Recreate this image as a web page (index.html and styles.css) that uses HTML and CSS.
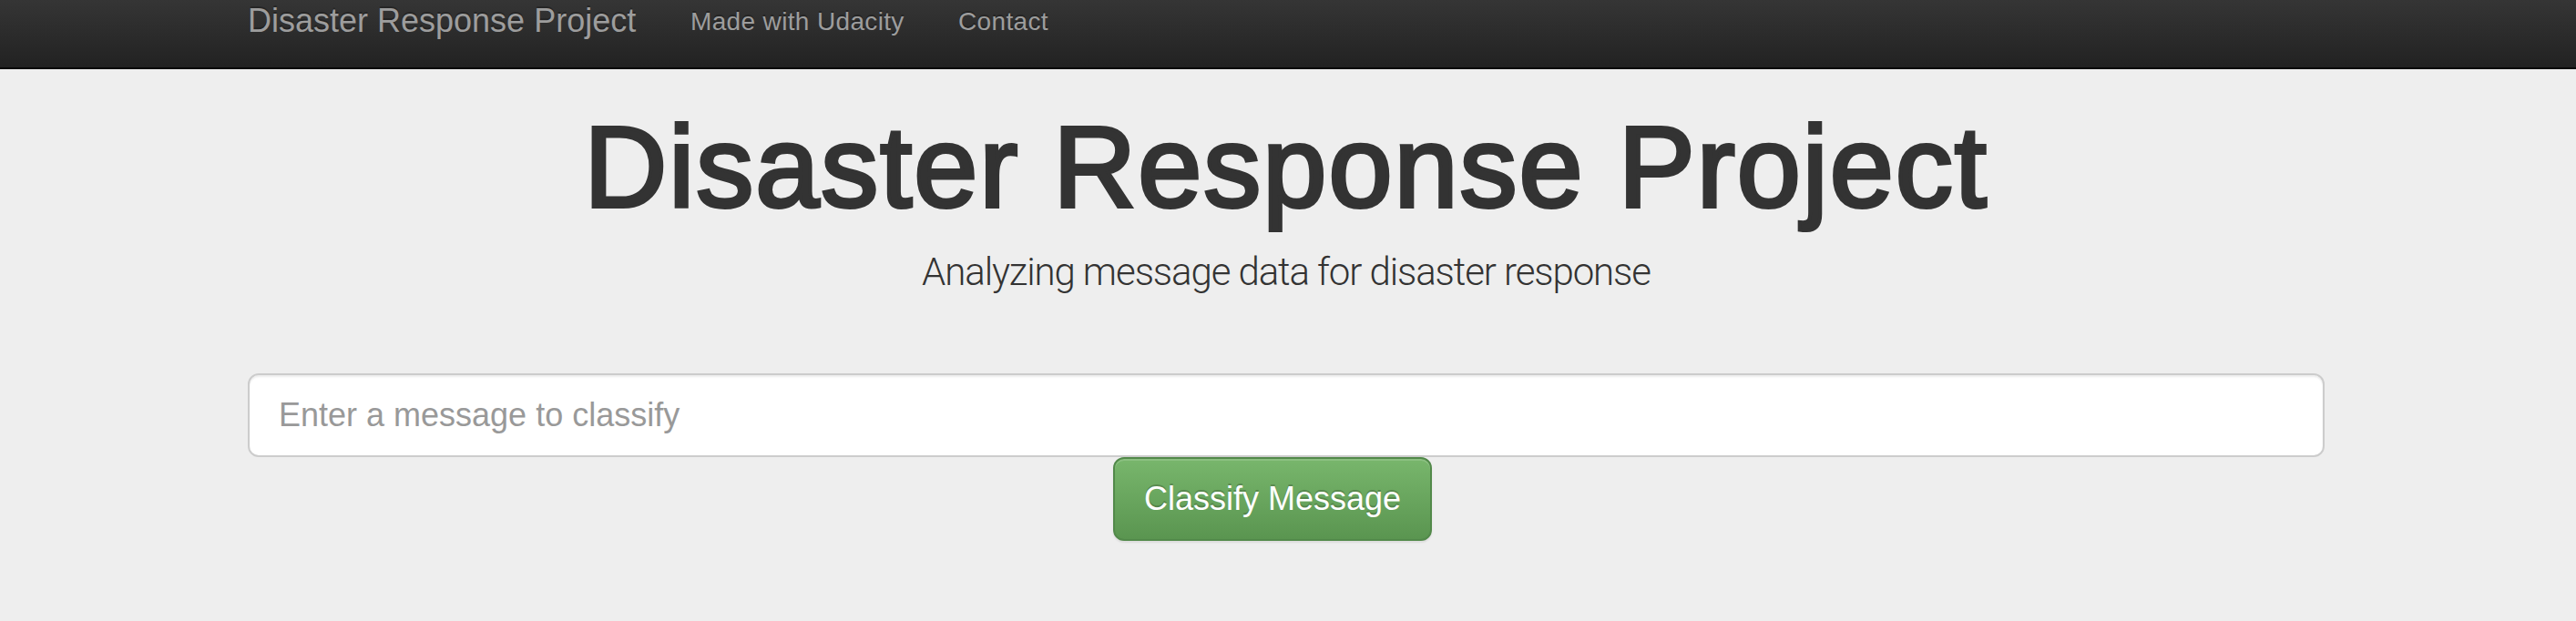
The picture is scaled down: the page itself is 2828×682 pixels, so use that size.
FILE: index.html
```html
<!DOCTYPE html>
<html lang="en">
<head>
<meta charset="utf-8">
<title>Disaster Response Project</title>
<link rel="stylesheet" href="styles.css">
</head>
<body>
<nav class="navbar">
  <div class="container nav-inner">
    <a class="brand" href="#">Disaster Response Project</a>
    <a class="nav-link nav-udacity" href="#">Made with Udacity</a>
    <a class="nav-link" href="#">Contact</a>
  </div>
</nav>
<main class="jumbotron">
  <div class="container">
    <h1 class="title">Disaster Response Project</h1>
    <p class="lead">Analyzing message data for disaster response</p>
    <form class="classify-form" action="#" method="get">
      <input class="query" type="text" name="query" placeholder="Enter a message to classify">
      <div class="btn-row">
        <button type="submit" class="btn-success">Classify Message</button>
      </div>
    </form>
  </div>
</main>
</body>
</html>
```
FILE: styles.css
```css
* { box-sizing: border-box; }
html, body { margin: 0; padding: 0; }
body {
  background: #eeeeee;
  font-family: "Liberation Sans", Arial, sans-serif;
  color: #333333;
}
.container {
  width: 2284px;
  padding-right: 4px;
  margin: 0 auto;
}
.navbar {
  height: 76px;
  background-image: linear-gradient(to bottom, #353535 0%, #222222 100%);
  border-bottom: 2px solid #080808;
}
.nav-inner {
  display: flex;
  align-items: flex-start;
}
.brand, .nav-link {
  color: #9d9d9d;
  text-decoration: none;
  text-shadow: 0 -2px 0 rgba(0, 0, 0, 0.25);
  white-space: nowrap;
}
.brand {
  font-size: 36px;
  line-height: 40px;
  margin-top: 3px;
  width: 486px;
}
.nav-link {
  font-size: 28px;
  line-height: 40px;
  margin-top: 4px;
  letter-spacing: 0.35px;
}
.nav-udacity {
  width: 294px;
}
.jumbotron {
  padding-top: 38px;
  padding-bottom: 60px;
}
.title {
  margin: 0;
  text-align: center;
  font-size: 126px;
  line-height: 139px;
  font-weight: normal;
  letter-spacing: 2px;
  -webkit-text-stroke: 4px #333333;
  color: #333333;
}
.lead {
  margin: 16px 0 0;
  text-align: center;
  font-family: "Roboto Light", Roboto, "Liberation Sans", sans-serif;
  font-weight: 300;
  font-size: 42px;
  line-height: 60px;
  letter-spacing: -1.1px;
  color: #333333;
}
.classify-form {
  margin-top: 81px;
}
.query {
  display: block;
  width: 100%;
  height: 92px;
  padding: 20px 32px;
  font-family: "Liberation Sans", Arial, sans-serif;
  font-size: 36px;
  line-height: 48px;
  color: #555555;
  background: #ffffff;
  border: 2px solid #cccccc;
  border-radius: 12px;
  box-shadow: inset 0 2px 2px rgba(0, 0, 0, 0.075);
  outline: none;
}
.query::placeholder {
  color: #999999;
}
.btn-row {
  margin-left: 41.6667%;
}
.btn-success {
  display: inline-block;
  height: 92px;
  padding: 20px 32px;
  font-family: "Liberation Sans", Arial, sans-serif;
  font-size: 36px;
  line-height: 48px;
  color: #ffffff;
  background-image: linear-gradient(to bottom, #78b66c 0%, #5a9550 100%);
  border: 2px solid #52894a;
  border-radius: 12px;
  text-shadow: 0 -2px 0 rgba(0, 0, 0, 0.2);
  box-shadow: inset 0 2px 0 rgba(255, 255, 255, 0.15), 0 2px 2px rgba(0, 0, 0, 0.075);
  cursor: pointer;
}
```
